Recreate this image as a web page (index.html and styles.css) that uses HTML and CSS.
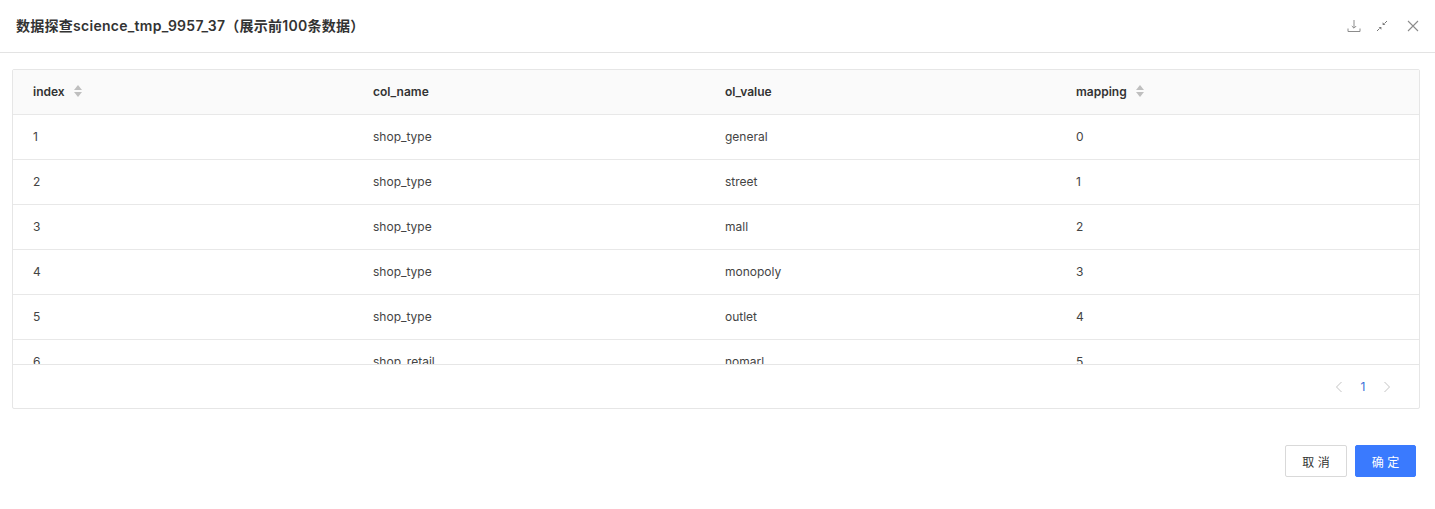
FILE: index.html
```html
<!DOCTYPE html>
<html lang="zh">
<head>
<meta charset="utf-8">
<title>数据探查</title>
<link rel="stylesheet" href="styles.css">
</head>
<body>
<div class="modal">
  <header class="modal-header">
    <h1 class="modal-title">数据探查science_tmp_9957_37（展示前100条数据）</h1>
    <div class="modal-actions">
      <svg class="icon" viewBox="0 0 14 14"><path d="M7 1v8M4.8 7 7 9.2 9.2 7M1 9.5v3h12v-3" fill="none" stroke="#8c8c8c"/></svg>
      <svg class="icon" viewBox="0 0 14 14"><path d="M2 12 4.5 9.5" fill="none" stroke="#777"/><path d="M3.6 8h2.8v2.8z" fill="#777"/><path d="M12 2 9.5 4.5" fill="none" stroke="#777"/><path d="M10.4 6H7.6V3.2z" fill="#777"/></svg>
      <svg class="icon icon-close" viewBox="0 0 14 14"><path d="M2 2l10 10M12 2 2 12" fill="none" stroke="#8c8c8c" stroke-width="1.1"/></svg>
    </div>
  </header>
  <main class="modal-body">
    <section class="card">
      <div class="grid-head">
        <div class="row head-row">
          <div class="cell">index<span class="sorter"><i class="up"></i><i class="down"></i></span></div>
          <div class="cell">col_name</div>
          <div class="cell">ol_value</div>
          <div class="cell">mapping<span class="sorter"><i class="up"></i><i class="down"></i></span></div>
        </div>
      </div>
      <div class="grid-body">
        <div class="row"><div class="cell">1</div><div class="cell">shop_type</div><div class="cell">general</div><div class="cell">0</div></div>
        <div class="row"><div class="cell">2</div><div class="cell">shop_type</div><div class="cell">street</div><div class="cell">1</div></div>
        <div class="row"><div class="cell">3</div><div class="cell">shop_type</div><div class="cell">mall</div><div class="cell">2</div></div>
        <div class="row"><div class="cell">4</div><div class="cell">shop_type</div><div class="cell">monopoly</div><div class="cell">3</div></div>
        <div class="row"><div class="cell">5</div><div class="cell">shop_type</div><div class="cell">outlet</div><div class="cell">4</div></div>
        <div class="row"><div class="cell">6</div><div class="cell">shop_retail</div><div class="cell">nomarl</div><div class="cell">5</div></div>
      </div>
      <nav class="pager">
        <svg class="chev" viewBox="0 0 8 12"><path d="M6.5 1 1.5 6l5 5" fill="none" stroke="#c4c4c4"/></svg>
        <span class="page">1</span>
        <svg class="chev" viewBox="0 0 8 12"><path d="M1.5 1l5 5-5 5" fill="none" stroke="#c4c4c4"/></svg>
      </nav>
    </section>
  </main>
  <footer class="modal-footer">
    <button class="btn">取 消</button>
    <button class="btn primary">确 定</button>
  </footer>
</div>
</body>
</html>
```
FILE: styles.css
```css
* { box-sizing: border-box; }
html, body { margin: 0; height: 100%; background: #fff; }
body {
  font-family: Inter, "Noto Sans CJK SC", sans-serif;
  font-size: 12px;
  color: #444;
  overflow: hidden;
}
.modal-header {
  height: 53px;
  display: flex;
  align-items: center;
  justify-content: space-between;
  padding: 0 15px 0 16px;
  border-bottom: 1px solid #e3e3e3;
}
.modal-title {
  margin: 0;
  font-size: 14px;
  font-weight: 600;
  color: #333;
  line-height: 52px;
  letter-spacing: 0.27px;
}
.modal-actions { display: flex; gap: 14px; align-items: center; }
.icon { width: 14px; height: 14px; display: block; }
.icon-close { margin-left: 3px; }
.modal-body { padding: 16px 15px 0 12px; }
.card {
  height: 340px;
  border: 1px solid #e6e6e6;
  border-radius: 2px;
  display: flex;
  flex-direction: column;
}
.row {
  display: grid;
  grid-template-columns: 340px 352px 351px 1fr;
  height: 45px;
  border-bottom: 1px solid #e8e8e8;
  align-items: center;
}
.head-row { background: #fafafa; font-weight: 600; color: #333; }
.cell { padding: 0 0 2px 20px; display: flex; align-items: center; }
.grid-body { height: 249px; overflow: hidden; flex: none; }
.sorter { display: inline-flex; flex-direction: column; gap: 2px; margin-left: 9px; }
.sorter i { width: 0; height: 0; border-left: 4.5px solid transparent; border-right: 4.5px solid transparent; display: block; }
.sorter .up { border-bottom: 5px solid #bfbfbf; }
.sorter .down { border-top: 5px solid #bfbfbf; }
.pager {
  flex: 1;
  border-top: 1px solid #e6e6e6;
  display: flex;
  align-items: center;
  justify-content: flex-end;
  gap: 16px;
  padding-right: 28px;
}
.chev { width: 8px; height: 12px; display: block; }
.page { color: #3a6fd8; width: 8px; text-align: center; }
.modal-footer {
  display: flex;
  justify-content: flex-end;
  gap: 8px;
  padding: 36px 19px 0 0;
}
.btn {
  font: inherit;
  height: 32px;
  width: 62px;
  background: #fff;
  color: #333;
  border: 1px solid #d9d9d9;
  border-radius: 2px;
  padding: 0;
}
.btn.primary { background: #3a7afe; border-color: #3a7afe; color: #fff; width: 61px; }
```
